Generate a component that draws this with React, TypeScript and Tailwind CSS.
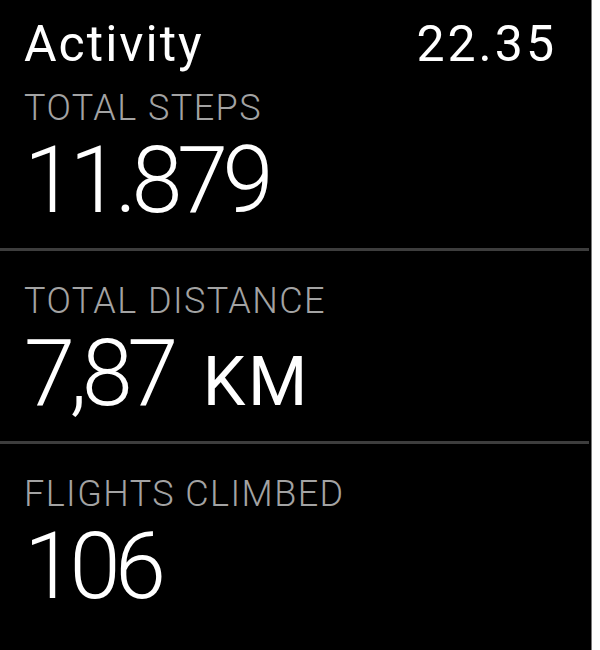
import React from 'react'

type Stat = {
  label: string
  value: string
  unit?: string
}

const stats: Stat[] = [
  { label: 'TOTAL STEPS', value: '11.879' },
  { label: 'TOTAL DISTANCE', value: '7,87', unit: 'KM' },
  { label: 'FLIGHTS CLIMBED', value: '106' },
]

function StatBlock({ stat, first }: { stat: Stat; first: boolean }) {
  return (
    <div className={first ? 'pt-[21px] pb-[21px]' : 'pt-[32px] pb-[21px]'}>
      <div className="text-[36px] leading-none font-light text-[#a3a3a3] tracking-[0.04em]">{stat.label}</div>
      <div className="mt-[9px] text-[92px] leading-none font-light text-white tracking-[-0.06em] whitespace-nowrap">
        {stat.value}
        {stat.unit && <span className="ml-[30px] text-[68px] font-normal tracking-[0.04em]">{stat.unit}</span>}
      </div>
    </div>
  )
}

export default function App() {
  return (
    <div className="w-[600px] h-[650px] bg-white flex font-['Roboto',sans-serif] overflow-hidden">
      <div className="w-[592px] h-full bg-black flex flex-col pl-[24px] border-r border-[#7a7a7a]">
        {/* Header */}
        <div className="flex justify-between items-baseline pt-[19px] pr-[34px] text-white leading-none">
          <span className="text-[50px] tracking-[0.04em]">Activity</span>
          <span className="text-[50px] tracking-[0.06em]">22.35</span>
        </div>

        {/* Stats */}
        {stats.map((s, i) => (
          <div key={s.label}>
            <StatBlock stat={s} first={i === 0} />
            {i < stats.length - 1 && <div className="-ml-[24px] mr-[2px] h-[3px] bg-[#3d3d3d]" />}
          </div>
        ))}
      </div>
    </div>
  )
}
